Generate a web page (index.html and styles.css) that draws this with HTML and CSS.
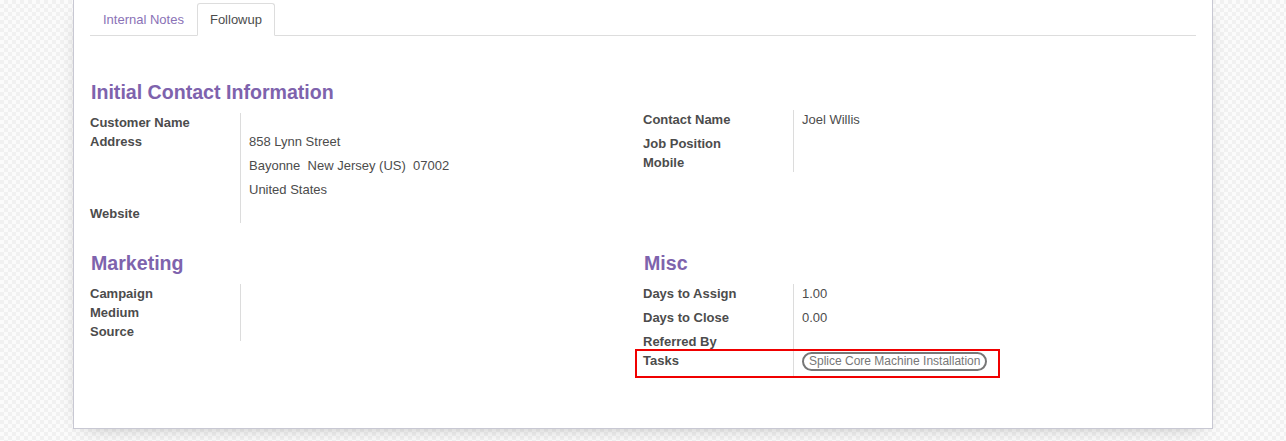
FILE: index.html
```html
<!DOCTYPE html>
<html lang="en">
<head>
<meta charset="utf-8">
<title>Followup</title>
<link rel="stylesheet" href="styles.css">
</head>
<body>
<div class="page">
  <div class="sheet">
    <ul class="tabs">
      <li class="tab"><a>Internal Notes</a></li>
      <li class="tab active"><a>Followup</a></li>
    </ul>

    <div class="group first">
      <div class="col">
        <h2 class="sep">Initial Contact Information</h2>
        <div class="fields">
          <div class="label">Customer Name</div><div class="value"></div>
          <div class="label">Address</div>
          <div class="value address">
            <div class="line">858 Lynn Street</div>
            <div class="line">Bayonne&nbsp; New Jersey (US)&nbsp; 07002</div>
            <div class="line">United States</div>
          </div>
          <div class="label">Website</div><div class="value"></div>
        </div>
      </div>
      <div class="col offset">
        <div class="fields">
          <div class="label">Contact Name</div><div class="value tall">Joel Willis</div>
          <div class="label">Job Position</div><div class="value"></div>
          <div class="label">Mobile</div><div class="value"></div>
        </div>
      </div>
    </div>

    <div class="group second">
      <div class="col">
        <h2 class="sep">Marketing</h2>
        <div class="fields">
          <div class="label">Campaign</div><div class="value"></div>
          <div class="label">Medium</div><div class="value"></div>
          <div class="label">Source</div><div class="value"></div>
        </div>
      </div>
      <div class="col">
        <h2 class="sep">Misc</h2>
        <div class="fields">
          <div class="label">Days to Assign</div><div class="value tall">1.00</div>
          <div class="label">Days to Close</div><div class="value tall">0.00</div>
          <div class="label">Referred By</div><div class="value"></div>
          <div class="label tasks-label">Tasks<span class="highlight"></span></div>
          <div class="value tasks"><span class="tag">Splice Core Machine Installation</span></div>
        </div>
      </div>
    </div>
  </div>
</div>
</body>
</html>
```

FILE: styles.css
```css
html, body {
  margin: 0;
  padding: 0;
}

body {
  font-family: "Liberation Sans", Arial, sans-serif;
  font-size: 13px;
  color: #4c4c4c;
  background-color: #fbfbfb;
  background-image: conic-gradient(#f1f1f1 25%, transparent 0 50%, #f1f1f1 0 75%, transparent 0);
  background-size: 8px 8px;
  height: 441px;
  overflow: hidden;
}

.page {
  display: flex;
  justify-content: center;
}

.sheet {
  width: 1140px;
  box-sizing: border-box;
  background: #fff;
  border: 1px solid #c8c8d3;
  border-top: none;
  box-shadow: 0 5px 20px -12px rgba(0, 0, 0, 0.45);
  padding: 3px 16px 51px;
}

/* tabs */
.tabs {
  display: flex;
  list-style: none;
  margin: 0;
  padding: 0;
  border-bottom: 1px solid #dddddd;
}

.tab {
  margin-bottom: -1px;
}

.tab a {
  display: block;
  padding: 7px 12px 6px;
  line-height: 18px;
  border: 1px solid transparent;
  border-radius: 3px 3px 0 0;
  color: #8a72b6;
  cursor: pointer;
}

.tab.active a {
  color: #4c4c4c;
  background: #fff;
  border-color: #dddddd;
  border-bottom-color: transparent;
}

/* groups */
.group {
  display: grid;
  grid-template-columns: 1fr 1fr;
  align-items: start;
}

.group.first {
  margin-top: 45px;
}

.group.second {
  margin-top: 29px;
}

.col.offset {
  padding-top: 29px;
}

.sep {
  margin: 0 0 10px;
  padding-left: 1px;
  font-size: 19.6px;
  line-height: 22px;
  font-weight: bold;
  color: #7e63ad;
}

.fields {
  display: grid;
  grid-template-columns: 150px 1fr;
  line-height: 19px;
}

.label {
  font-weight: bold;
  position: relative;
}

.value {
  border-left: 1px solid #dcdcdc;
  padding-left: 8px;
  min-height: 19px;
}

.value.tall {
  padding-bottom: 5px;
}

.address .line {
  margin-bottom: 5px;
}

.value.tasks {
  padding-bottom: 6px;
}

.tag {
  display: inline-block;
  font-size: 12px;
  line-height: 15px;
  padding: 0 5px;
  border: 2px solid #777;
  border-radius: 10px;
  color: #777;
}

.highlight {
  position: absolute;
  left: -8px;
  top: -2px;
  width: 365px;
  height: 29px;
  box-sizing: border-box;
  border: 2px solid #f00000;
  pointer-events: none;
}
```
